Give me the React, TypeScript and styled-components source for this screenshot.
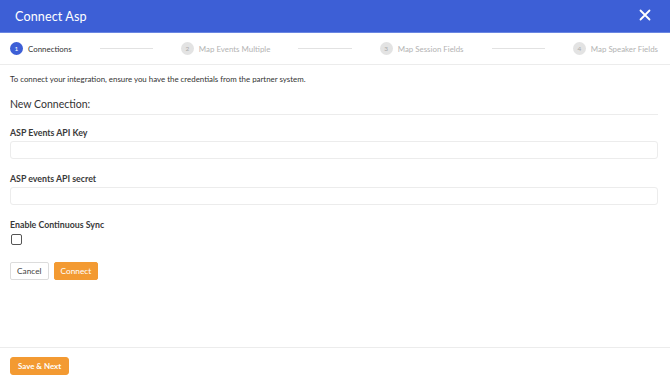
import React from "react";
import styled, { createGlobalStyle } from "styled-components";

const Global = createGlobalStyle`
  html, body { margin: 0; padding: 0; background: #fff; }
  body { font-family: Lato, "Open Sans", "Liberation Sans", sans-serif; color: #333; }
  * { box-sizing: border-box; }
`;

const Page = styled.div`
  height: 100vh;
  display: flex;
  flex-direction: column;
  background: #fff;
`;

const Header = styled.header`
  height: 33px;
  background: #3d5fd6;
  border-bottom: 1px solid #6a86e2;
  display: flex;
  align-items: center;
  justify-content: space-between;
  padding: 0 15px 0 15px;
`;

const Title = styled.h1`
  margin: 0;
  font-size: 12.6px;
  font-weight: 400;
  color: #fff;
  letter-spacing: 0.1px;
`;

const CloseBtn = styled.button`
  background: none;
  border: none;
  padding: 0;
  width: 12px;
  height: 12px;
  margin-right: 4px;
  margin-top: -3px;
  display: flex;
  cursor: pointer;
`;

const Stepper = styled.nav`
  height: 32px;
  display: flex;
  align-items: center;
  padding: 0 12px 0 10px;
  border-bottom: 1px solid #ececec;
`;

const Step = styled.div`
  display: flex;
  align-items: center;
  gap: 5px;
`;

const StepNum = styled.span<{ $active?: boolean }>`
  width: 13px;
  height: 13px;
  border-radius: 50%;
  background: ${(p) => (p.$active ? "#3d5fd6" : "#e3e3e3")};
  color: ${(p) => (p.$active ? "#fff" : "#aaa")};
  font-size: 6.5px;
  display: flex;
  align-items: center;
  justify-content: center;
`;

const StepLabel = styled.span<{ $active?: boolean }>`
  font-size: 7.9px;
  color: ${(p) => (p.$active ? "#333" : "#b3b3b3")};
  white-space: nowrap;
`;

const StepLine = styled.div`
  flex: 1;
  height: 1px;
  background: #e2e2e2;
  margin: 0 28px;
`;

const Content = styled.main`
  flex: 1;
  padding: 0 12px 0 10px;
  display: flex;
  flex-direction: column;
`;

const Intro = styled.p`
  margin: 8px 0 0;
  font-size: 7.9px;
  line-height: 12px;
  color: #333;
`;

const SectionTitle = styled.h2`
  margin: 12px 0 0;
  font-size: 10.5px;
  font-weight: 400;
  line-height: 14px;
  color: #333;
  padding-bottom: 3px;
  border-bottom: 1px solid #ececec;
`;

const Field = styled.div<{ $gap?: number }>`
  display: flex;
  flex-direction: column;
  margin-top: ${(p) => p.$gap ?? 12}px;
`;

const Label = styled.label`
  font-size: 8.8px;
  font-weight: 700;
  color: #3a3a3a;
  line-height: 12px;
`;

const Input = styled.input`
  margin-top: 2px;
  height: 18px;
  border: 1px solid #ececec;
  border-radius: 3px;
  outline: none;
  padding: 0 6px;
  font-family: inherit;
`;

const Checkbox = styled.span`
  margin-top: 3px;
  margin-left: 1px;
  width: 11px;
  height: 11px;
  border: 1.3px solid #555;
  border-radius: 2px;
  display: block;
`;

const Actions = styled.div`
  display: flex;
  gap: 5px;
  margin-top: 17px;
`;

const Button = styled.button<{ $primary?: boolean }>`
  height: 18px;
  padding: 0 6px;
  border-radius: 2px;
  font-family: inherit;
  font-size: 8.3px;
  border: 1px solid ${(p) => (p.$primary ? "#f39a32" : "#dcdcdc")};
  background: ${(p) => (p.$primary ? "#f39a32" : "#fff")};
  color: ${(p) => (p.$primary ? "#fff" : "#444")};
  cursor: pointer;
`;

const Footer = styled.footer`
  border-top: 1px solid #ececec;
  padding: 9px 10px 7px;
  display: flex;
`;

const SaveButton = styled(Button)`
  font-weight: 700;
  font-size: 7.9px;
  padding: 0 7px;
  border-radius: 3px;
`;

const steps = ["Connections", "Map Events Multiple", "Map Session Fields", "Map Speaker Fields"];

export default function App() {
  return (
    <>
      <Global />
      <Page>
        <Header>
          <Title>Connect Asp</Title>
          <CloseBtn aria-label="Close">
            <svg width="12" height="12" viewBox="0 0 12 12">
              <path d="M1.5 1.5 L10.5 10.5 M10.5 1.5 L1.5 10.5" stroke="#fff" strokeWidth="1.8" strokeLinecap="round" />
            </svg>
          </CloseBtn>
        </Header>
        <Stepper>
          {steps.map((s, i) => (
            <React.Fragment key={s}>
              {i > 0 && <StepLine />}
              <Step>
                <StepNum $active={i === 0}>{i + 1}</StepNum>
                <StepLabel $active={i === 0}>{s}</StepLabel>
              </Step>
            </React.Fragment>
          ))}
        </Stepper>
        <Content>
          <Intro>To connect your integration, ensure you have the credentials from the partner system.</Intro>
          <SectionTitle>New Connection:</SectionTitle>
          <Field>
            <Label>ASP Events API Key</Label>
            <Input />
          </Field>
          <Field $gap={14}>
            <Label>ASP events API secret</Label>
            <Input />
          </Field>
          <Field $gap={14}>
            <Label>Enable Continuous Sync</Label>
            <Checkbox />
          </Field>
          <Actions>
            <Button>Cancel</Button>
            <Button $primary>Connect</Button>
          </Actions>
        </Content>
        <Footer>
          <SaveButton $primary>Save &amp; Next</SaveButton>
        </Footer>
      </Page>
    </>
  );
}
